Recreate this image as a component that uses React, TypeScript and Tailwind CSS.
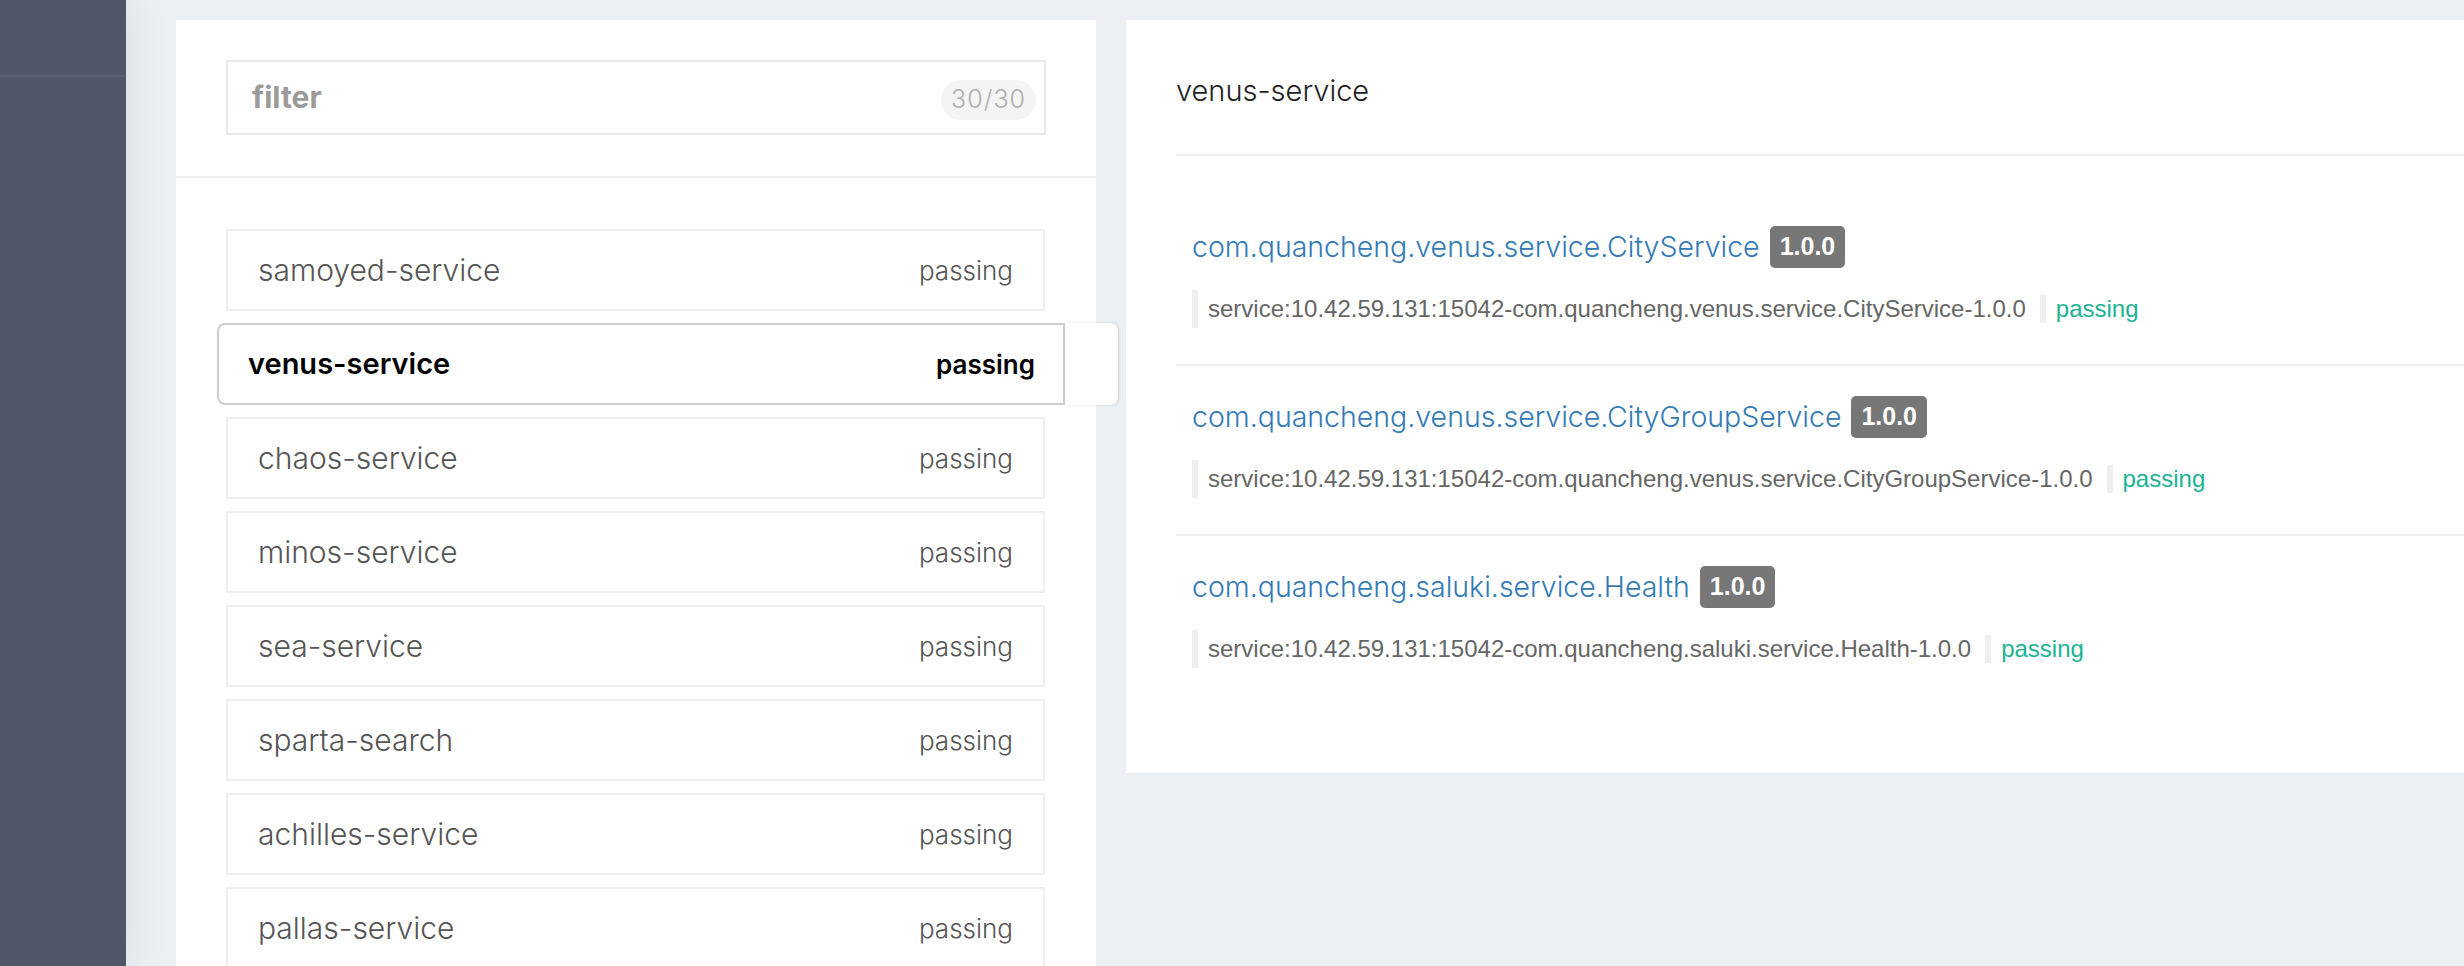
import React from "react";

const items = [
  "samoyed-service",
  "venus-service",
  "chaos-service",
  "minos-service",
  "sea-service",
  "sparta-search",
  "achilles-service",
  "pallas-service",
];

const services = [
  {
    name: "com.quancheng.venus.service.CityService",
    id: "service:10.42.59.131:15042-com.quancheng.venus.service.CityService-1.0.0",
  },
  {
    name: "com.quancheng.venus.service.CityGroupService",
    id: "service:10.42.59.131:15042-com.quancheng.venus.service.CityGroupService-1.0.0",
  },
  {
    name: "com.quancheng.saluki.service.Health",
    id: "service:10.42.59.131:15042-com.quancheng.saluki.service.Health-1.0.0",
  },
];

const poppins = "font-['Inter','Noto_Sans',sans-serif]";
const helv = "font-['Liberation_Sans','Arial',sans-serif]";

export default function App() {
  return (
    <div className="flex h-[966px] w-[2464px] overflow-hidden bg-[#eceff4]">
      <aside className="relative z-10 h-full w-[126px] shrink-0 bg-[#515568] shadow-[6px_0_40px_rgba(0,0,0,0.07)]">
        <div className="h-[77px] border-b-2 border-[#5b5f73]" />
      </aside>

      <main className="flex shrink-0 gap-[30px] pl-[50px] pt-[20px]">
        {/* left panel */}
        <section className={`w-[920px] shrink-0 self-start bg-white ${poppins}`}>
          <div className="border-b-2 border-[#eeeff1] px-[50px] pb-[41px] pt-[40px]">
            <div className="flex h-[75px] items-center justify-between border-2 border-[#e6e8ea] pl-[24px] pr-[8px]">
              <span className="text-[30px] font-bold text-[#9b9b9b]">filter</span>
              <span className="mt-[5px] flex h-[40px] items-center rounded-full bg-[#f4f4f4] px-[10px] text-[25px] font-light tracking-[1px] text-[#aeaeae]">
                30/30
              </span>
            </div>
          </div>
          <div className="flex flex-col gap-[12px] pl-[50px] pr-[51px] pt-[51px]">
            {items.map((it) =>
              it === "venus-service" ? (
                <div key={it} className="relative z-10 -ml-[9px] -mr-[73px] flex h-[82px]">
                  <div className="flex flex-1 items-center justify-between rounded-l-[8px] border-2 border-[#cdcdcd] pl-[29px] pr-[28px]">
                    <span className="text-[29px] font-semibold text-black">{it}</span>
                    <span className="text-[26px] font-semibold text-black">passing</span>
                  </div>
                  <div className="w-[53px] rounded-r-[8px] bg-white shadow-[1px_0_3px_rgba(0,0,0,0.12)]" />
                </div>
              ) : (
                <div
                  key={it}
                  className="flex h-[82px] items-center justify-between border-2 border-[#efefef] px-[30px]"
                >
                  <span className="text-[30px] font-light text-[#555]">{it}</span>
                  <span className="text-[26px] font-light text-[#555]">passing</span>
                </div>
              )
            )}
          </div>
        </section>

        {/* right panel */}
        <section className="w-[1400px] shrink-0 self-start bg-white pl-[50px]">
          <div className={`border-b-2 border-[#eeeff1] pb-[40px] pt-[48px] text-[29px] font-light leading-[46px] text-[#222] ${poppins}`}>
            venus-service
          </div>
          <div className="pb-[69px] pt-[40px]">
            {services.map((s, i) => (
              <div
                key={s.name}
                className={`pb-[36px] pl-[16px] pt-[30px] ${i < services.length - 1 ? "border-b-2 border-[#eeeff1]" : ""}`}
              >
                <div className="flex h-[42px] items-center gap-[10px]">
                  <span className={`text-[28.5px] font-light text-[#337ab7] ${poppins}`}>{s.name}</span>
                  <span className={`flex h-[42px] items-center rounded-[5px] bg-[#777] px-[10px] text-[25px] font-bold text-white ${helv}`}>
                    1.0.0
                  </span>
                </div>
                <div className={`mt-[22px] flex h-[38px] items-center border-l-[6px] border-[#eeeeee] pl-[10px] text-[24px] text-[#666] ${helv}`}>
                  <span className="pr-[14px]">{s.id}</span>
                  <span className="flex h-[28px] items-center border-l-[6px] border-[#eeeeee] pl-[10px] text-[#1ab394]">
                    passing
                  </span>
                </div>
              </div>
            ))}
          </div>
        </section>
      </main>
    </div>
  );
}
